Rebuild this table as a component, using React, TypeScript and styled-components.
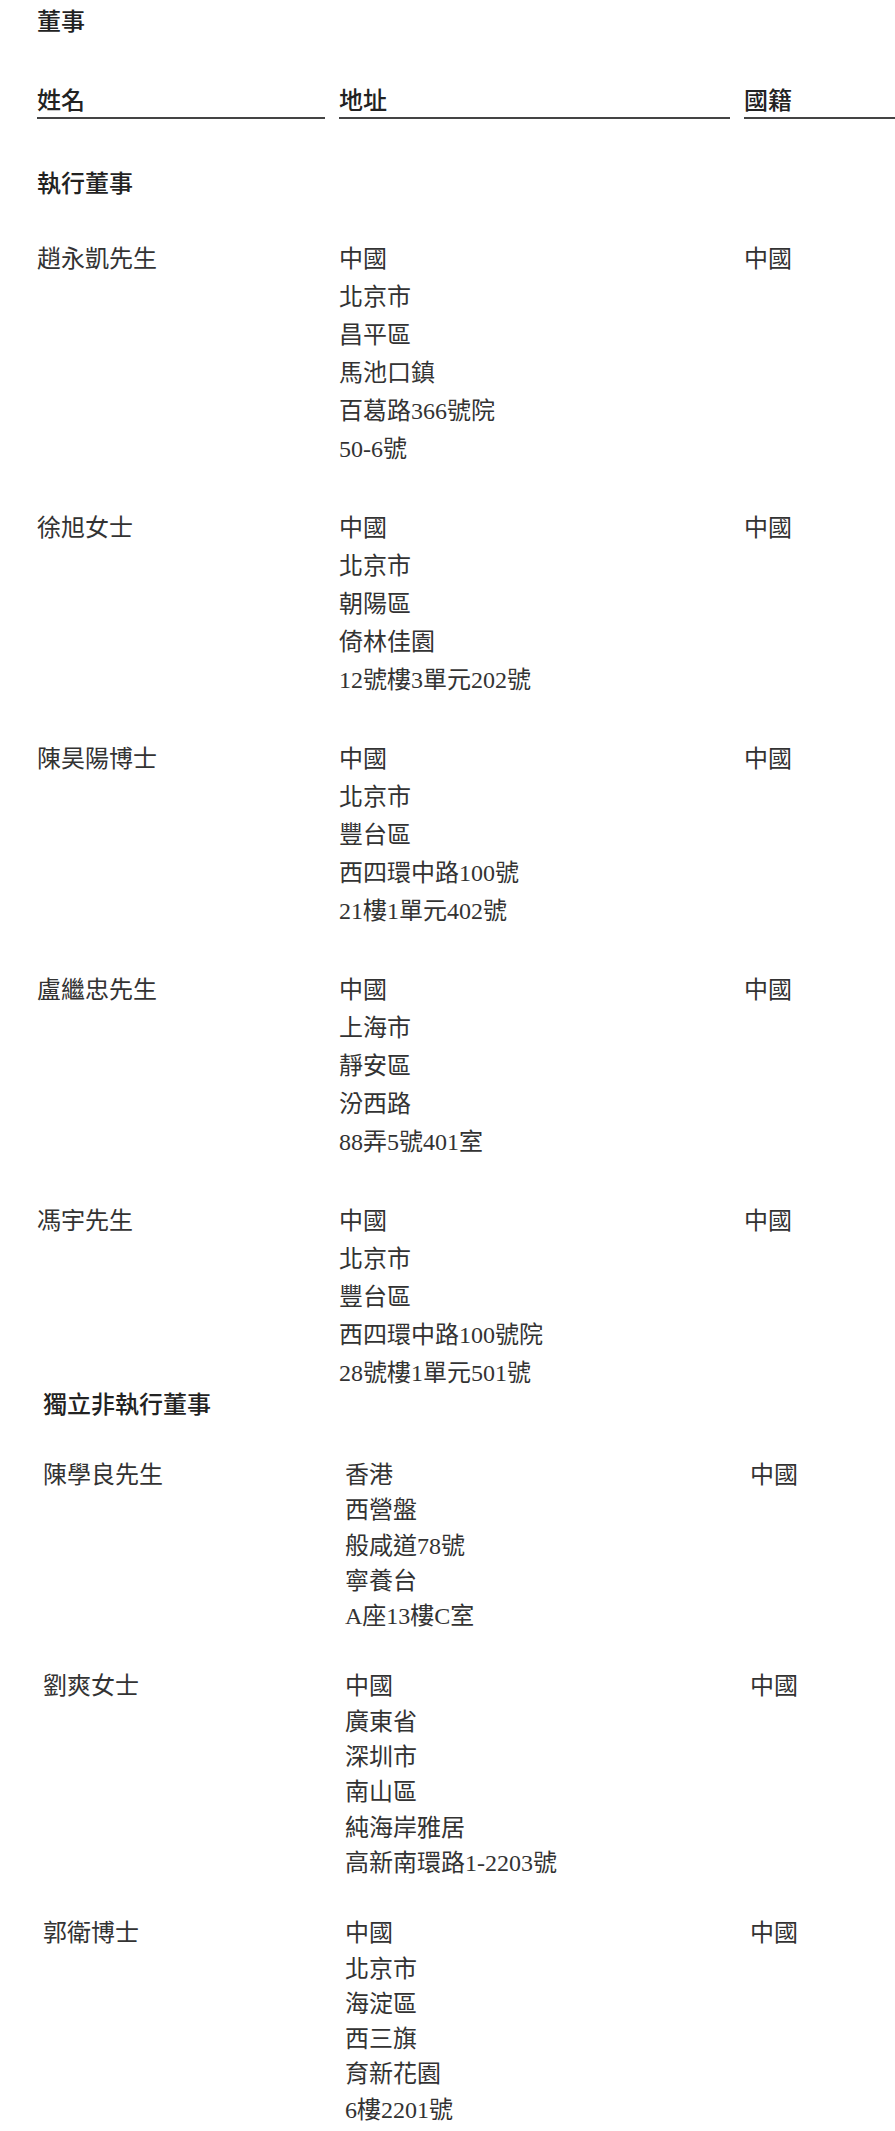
import { FC } from "react";
import styled, { createGlobalStyle } from "styled-components";

const GlobalStyle = createGlobalStyle`
  html, body {
    margin: 0;
    padding: 0;
    background: #fff;
  }
  body {
    font-family: "Liberation Serif", "Noto Sans CJK TC", serif;
    color: #2b2b2b;
  }
`;

const Page = styled.div`
  width: 895px;
  padding-top: 5px;
  overflow: hidden;
`;

const Section = styled.div<{ $indent: number }>`
  padding-left: ${(p) => p.$indent}px;
`;

const Title = styled.div`
  font-family: "Noto Sans CJK TC", sans-serif;
  font-size: 24px;
  font-weight: 500;
  line-height: 30px;
  color: #222;
`;

const Columns = styled.div`
  display: grid;
  grid-template-columns: 288px 391px 1fr;
  column-gap: 14px;
`;

const HeaderRow = styled(Columns)`
  margin-top: 49px;
`;

const HeaderCell = styled.div`
  font-family: "Noto Sans CJK TC", sans-serif;
  font-size: 24px;
  font-weight: 500;
  line-height: 30px;
  padding-bottom: 3px;
  border-bottom: 2px solid #444;
  color: #222;
`;

const SectionTitle = styled.div<{ $mt: number; $lh: number }>`
  margin-top: ${(p) => p.$mt}px;
  font-family: "Noto Sans CJK TC", sans-serif;
  font-size: 24px;
  font-weight: 500;
  line-height: ${(p) => p.$lh}px;
  color: #222;
`;

const Row = styled(Columns)<{ $mt: number }>`
  margin-top: ${(p) => p.$mt}px;
`;

const Cell = styled.div<{ $lh: number }>`
  font-family: "Liberation Serif", "Noto Sans CJK TC", serif;
  font-size: 24px;
  line-height: ${(p) => p.$lh}px;
  color: #333;
  white-space: nowrap;
`;

interface Director {
  name: string;
  address: string[];
  nationality: string;
}

const executive: Director[] = [
  {
    name: "趙永凱先生",
    address: ["中國", "北京市", "昌平區", "馬池口鎮", "百葛路366號院", "50-6號"],
    nationality: "中國",
  },
  {
    name: "徐旭女士",
    address: ["中國", "北京市", "朝陽區", "倚林佳園", "12號樓3單元202號"],
    nationality: "中國",
  },
  {
    name: "陳昊陽博士",
    address: ["中國", "北京市", "豐台區", "西四環中路100號", "21樓1單元402號"],
    nationality: "中國",
  },
  {
    name: "盧繼忠先生",
    address: ["中國", "上海市", "靜安區", "汾西路", "88弄5號401室"],
    nationality: "中國",
  },
  {
    name: "馮宇先生",
    address: ["中國", "北京市", "豐台區", "西四環中路100號院", "28號樓1單元501號"],
    nationality: "中國",
  },
];

const independent: Director[] = [
  {
    name: "陳學良先生",
    address: ["香港", "西營盤", "般咸道78號", "寧養台", "A座13樓C室"],
    nationality: "中國",
  },
  {
    name: "劉爽女士",
    address: ["中國", "廣東省", "深圳市", "南山區", "純海岸雅居", "高新南環路1-2203號"],
    nationality: "中國",
  },
  {
    name: "郭衛博士",
    address: ["中國", "北京市", "海淀區", "西三旗", "育新花園", "6樓2201號"],
    nationality: "中國",
  },
];

interface ListProps {
  items: Director[];
  lineHeight: number;
  firstGap: number;
  gap: number;
}

const DirectorList: FC<ListProps> = ({ items, lineHeight, firstGap, gap }) => (
  <>
    {items.map((d, i) => (
      <Row key={d.name} $mt={i === 0 ? firstGap : gap}>
        <Cell $lh={lineHeight}>{d.name}</Cell>
        <Cell $lh={lineHeight}>
          {d.address.map((line) => (
            <div key={line}>{line}</div>
          ))}
        </Cell>
        <Cell $lh={lineHeight}>{d.nationality}</Cell>
      </Row>
    ))}
  </>
);

const App: FC = () => {
  return (
    <Page>
      <GlobalStyle />
      <Section $indent={37}>
        <Title>董事</Title>
        <HeaderRow>
          <HeaderCell>姓名</HeaderCell>
          <HeaderCell>地址</HeaderCell>
          <HeaderCell>國籍</HeaderCell>
        </HeaderRow>
        <SectionTitle $mt={48} $lh={30}>
          執行董事
        </SectionTitle>
        <DirectorList items={executive} lineHeight={38} firstGap={43} gap={41} />
      </Section>
      <Section $indent={43}>
        <SectionTitle $mt={0} $lh={22}>
          獨立非執行董事
        </SectionTitle>
        <DirectorList items={independent} lineHeight={35.3} firstGap={44} gap={35} />
      </Section>
    </Page>
  );
};

export default App;
